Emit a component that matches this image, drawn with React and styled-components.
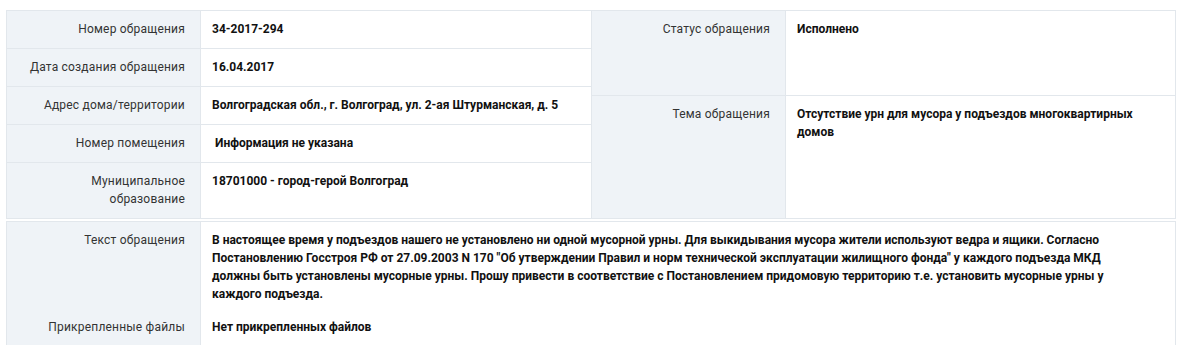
import React from "react";
import styled, { createGlobalStyle } from "styled-components";

const Global = createGlobalStyle`
  html, body { margin: 0; padding: 0; background: #fff; }
  body { font-family: Roboto, "Liberation Sans", Arial, sans-serif; font-size: 12px; color: #222; }
  * { box-sizing: border-box; }
`;

const Page = styled.div`
  padding: 10px 0 0 6px;
  width: 1176px;
  display: flex;
  flex-direction: column;
  gap: 2px;
`;

const TopSection = styled.div`
  display: grid;
  grid-template-columns: 584px 584px;
  border: 1px solid #e2e7ec;
`;

const Half = styled.div`
  display: grid;
  grid-template-columns: 194px 1fr;
  grid-template-rows: ${(p) => p.$rows};
  border-left: ${(p) => (p.$right ? "1px solid #e2e7ec" : "none")};
`;

const Label = styled.div`
  background: #eff3f7;
  border-right: 1px solid #e2e7ec;
  border-top: ${(p) => (p.$first ? "none" : "1px solid #e2e7ec")};
  padding: 9px 15px 9px 16px;
  text-align: right;
  line-height: 18px;
  letter-spacing: 0.2px;
  color: #333;
`;

const Value = styled.div`
  background: #fff;
  border-top: ${(p) => (p.$first ? "none" : "1px solid #e2e7ec")};
  padding: 9px ${(p) => (p.$wide ? "30px" : "12px")} 9px 11px;
  line-height: 18px;
  font-weight: 700;
  color: #111;
`;

const BottomSection = styled.div`
  display: grid;
  grid-template-columns: 194px 1fr;
  border: 1px solid #e2e7ec;
  border-bottom: none;
`;

const BLabel = styled(Label)`
  border-top: none;
  padding-top: ${(p) => p.$pt || "9px"};
`;

const BValue = styled(Value)`
  border-top: none;
  padding-top: ${(p) => p.$pt || "9px"};
`;

const left = [
  ["Номер обращения", "34-2017-294"],
  ["Дата создания обращения", "16.04.2017"],
  ["Адрес дома/территории", "Волгоградская обл., г. Волгоград, ул. 2-ая Штурманская, д. 5"],
  ["Номер помещения", "\u00a0Информация не указана"],
  ["Муниципальное образование", "18701000 - город-герой Волгоград"],
];

const right = [
  ["Статус обращения", "Исполнено"],
  ["Тема обращения", "Отсутствие урн для мусора у подъездов многоквартирных домов"],
];

export default function App() {
  return (
    <>
      <Global />
      <Page>
        <TopSection>
          <Half $rows="37px 38px 38px 38px 56px">
            {left.map(([l, v], i) => (
              <React.Fragment key={l}>
                <Label $first={i === 0}>{l}</Label>
                <Value $first={i === 0}>{v}</Value>
              </React.Fragment>
            ))}
          </Half>
          <Half $right $rows="38fr 56fr">
            {right.map(([l, v], i) => (
              <React.Fragment key={l}>
                <Label $first={i === 0}>{l}</Label>
                <Value $first={i === 0} $wide>{v}</Value>
              </React.Fragment>
            ))}
          </Half>
        </TopSection>
        <BottomSection>
          <BLabel>Текст обращения</BLabel>
          <BValue $wide>
            В настоящее время у подъездов нашего не установлено ни одной мусорной урны. Для выкидывания мусора жители используют ведра и ящики. Согласно Постановлению Госстроя РФ от 27.09.2003 N 170 "Об утверждении Правил и норм технической эксплуатации жилищного фонда" у каждого подъезда МКД должны быть установлены мусорные урны. Прошу привести в соответствие с Постановлением придомовую территорию т.е. установить мусорные урны у каждого подъезда.
          </BValue>
          <BLabel $pt="6px">Прикрепленные файлы</BLabel>
          <BValue $pt="6px">Нет прикрепленных файлов</BValue>
        </BottomSection>
      </Page>
    </>
  );
}
